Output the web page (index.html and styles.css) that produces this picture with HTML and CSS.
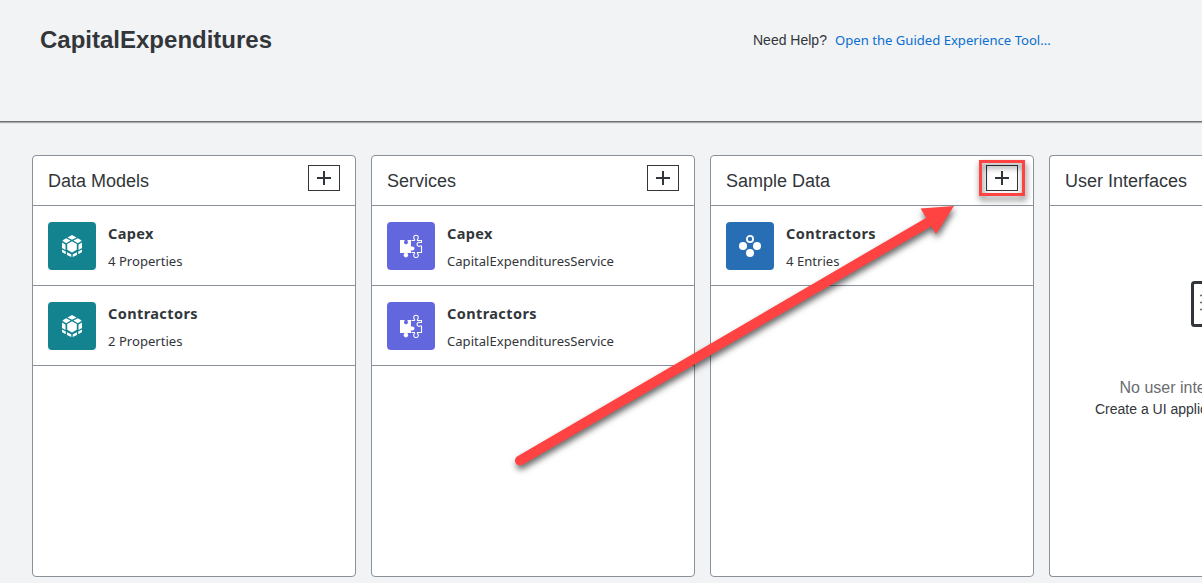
FILE: index.html
```html
<!DOCTYPE html>
<html lang="en">
<head>
<meta charset="utf-8">
<title>CapitalExpenditures</title>
<link rel="stylesheet" href="styles.css">
</head>
<body>
<svg width="0" height="0" class="symbols">
  <symbol id="plus" viewBox="0 0 14 14"><path d="M7 0v14M0 7h14" stroke="#32363a" stroke-width="2"/></symbol>
  <symbol id="model" viewBox="0 0 22 24">
    <path fill="#fff" d="M11 1 15.500 3.500 11 5.800 6.500 3.500ZM5.300 4.200 9.600 6.500 5.200 9.200 1.600 7V6.300ZM16.700 4.200 20.400 6.300V7L16.800 9.200 12.400 6.500ZM1 8.400 4.500 10.500V16L1 14ZM21 8.400V14L17.500 16V10.500ZM11 7.300 15.800 10.100V15.700L11 18.500 6.200 15.700V10.100ZM1 15.500 4.700 17.600V20.200L1 18ZM21 15.500V18L17.300 20.200V17.600ZM6 18.200 10.300 20.300V23L6 20.900ZM16 18.200V20.900L11.700 23V20.300Z"/>
  </symbol>
  <symbol id="service" viewBox="0 0 24 24">
    <path fill="#fff" d="M1 6h4.500v1.200a1.900 1.900 0 1 0 3 0V6H12v6.500h1.500a2 2 0 1 1 0 4H12V19H8.600v.8a2.200 2.200 0 1 1-3.400 0V19H1Z"/>
    <path fill="none" stroke="#fff" stroke-width="1.100" d="M12.500 6.500h3V5.300a2.300 2.300 0 1 1 3 0v1.200h4V8.500h-1.500a2 2 0 1 0 0 3.500h1.500v6.500h-4v1a2.300 2.300 0 1 1-3 0v-1h-3"/>
  </symbol>
  <symbol id="data" viewBox="0 0 24 24"><g fill="#fff"><circle cx="5" cy="12" r="4"/><circle cx="19" cy="12" r="4"/><circle cx="12" cy="19" r="4"/></g><circle cx="12" cy="5" r="3.100" fill="none" stroke="#fff" stroke-width="1.800"/></symbol>
</svg>
<header class="page-header">
  <h1 class="title">CapitalExpenditures</h1>
  <div class="help"><span class="question">Need Help?</span><a class="guide">Open the Guided Experience Tool...</a></div>
</header>
<main class="board">
  <section class="panel">
    <div class="panel-head"><h2>Data Models</h2><button class="add"><svg><use href="#plus"/></svg></button></div>
    <div class="item"><span class="tile teal"><svg class="model"><use href="#model"/></svg></span><div><b class="name">Capex</b><span class="detail">4 Properties</span></div></div>
    <div class="item"><span class="tile teal"><svg class="model"><use href="#model"/></svg></span><div><b class="name">Contractors</b><span class="detail">2 Properties</span></div></div>
  </section>
  <section class="panel">
    <div class="panel-head"><h2>Services</h2><button class="add"><svg><use href="#plus"/></svg></button></div>
    <div class="item"><span class="tile violet"><svg><use href="#service"/></svg></span><div><b class="name">Capex</b><span class="detail">CapitalExpendituresService</span></div></div>
    <div class="item"><span class="tile violet"><svg><use href="#service"/></svg></span><div><b class="name">Contractors</b><span class="detail">CapitalExpendituresService</span></div></div>
  </section>
  <section class="panel">
    <div class="panel-head"><h2>Sample Data</h2><button class="add"><svg><use href="#plus"/></svg></button></div>
    <div class="item"><span class="tile blue"><svg><use href="#data"/></svg></span><div><b class="name">Contractors</b><span class="detail">4 Entries</span></div></div>
  </section>
  <section class="panel clipped">
    <div class="panel-head"><h2>User Interfaces</h2></div>
    <div class="empty">
      <svg class="empty-icon" viewBox="0 0 40 46"><rect x="1.500" y="1.500" width="37" height="43" rx="2" fill="none" stroke="#32363a" stroke-width="3"/><path d="M9 14.500h20M9 21.500h20M9 28.500h20" stroke="#6a6d70" stroke-width="1.500"/></svg>
      <p class="empty-title">No user inte</p>
      <p class="empty-text">Create a UI applic</p>
    </div>
  </section>
</main>
<svg class="callout" viewBox="0 0 1202 583">
  <rect x="980.500" y="161.500" width="43" height="33" fill="none" stroke="#ff4343" stroke-width="3"/>
  <path d="M520 460.500 928 222.500" stroke="#ff4343" stroke-width="10" stroke-linecap="round"/>
  <path d="M954 206 920.500 208.500 936 234Z" fill="#ff4343"/>
</svg>
</body>
</html>
```
FILE: styles.css
```css
* { box-sizing: border-box; }
body {
  margin: 0;
  height: 583px;
  overflow: hidden;
  background: #f2f3f5;
  color: #32363a;
  font-family: "Liberation Sans", Arial, sans-serif;
}
h1, h2, p { margin: 0; }
.symbols { position: absolute; }
.page-header {
  height: 122px;
  padding: 26px 0 0 40px;
  display: flex;
  align-items: flex-start;
  border-bottom: 1px solid #6d7075;
  box-shadow: 0 1px 1px #a9abad;
}
.title { width: 713px; font-size: 24px; line-height: 28px; }
.help { display: flex; font-size: 14px; line-height: 28px; white-space: nowrap; }
.question { width: 82px; }
.guide { color: #0a6ed1; font-family: "Noto Sans", sans-serif; font-size: 13.100px; }
.board { display: flex; gap: 15px; padding: 33px 0 0 32px; overflow: hidden; }
.panel {
  flex: 0 0 324px;
  height: 422px;
  background: #fff;
  border: 1px solid #89919a;
  border-radius: 4px;
}
.clipped {
  flex: 0 0 153px;
  overflow: hidden;
  border-right: 0;
  border-radius: 4px 0 0 4px;
}
.panel-head {
  height: 50px;
  padding: 9px 15px 0;
  display: flex;
  justify-content: space-between;
  border-bottom: 1px solid #89919a;
}
.panel-head h2 { font-size: 18px; line-height: 32px; font-weight: 400; white-space: nowrap; }
.add {
  width: 32px;
  height: 26px;
  padding: 0;
  display: flex;
  align-items: center;
  justify-content: center;
  background: #fff;
  border: 1px solid #32363a;
}
.add svg { width: 14px; height: 14px; }
.item {
  height: 80px;
  padding: 15px 15px 0;
  display: flex;
  gap: 12px;
  border-bottom: 1px solid #89919a;
  font-family: "Noto Sans", sans-serif;
}
.tile {
  width: 48px;
  height: 48px;
  margin-top: 1px;
  display: flex;
  align-items: center;
  justify-content: center;
  border-radius: 4px;
}
.tile svg { width: 24px; height: 24px; }
.tile .model { width: 22px; }
.teal { background: #12838f; }
.violet { background: #6367de; }
.blue { background: #286eb4; }
.name, .detail { display: block; white-space: nowrap; }
.name { font-size: 14.500px; line-height: 24px; letter-spacing: .4px; }
.detail { margin-top: 4px; font-size: 13.100px; line-height: 24px; }
.empty { padding-left: 45px; white-space: nowrap; }
.empty-icon { display: block; width: 40px; height: 46px; margin: 75px 0 0 96px; }
.empty-title { margin: 50px 0 0 24.500px; font-size: 16px; line-height: 21px; color: #6a6d70; }
.empty-text { font-size: 14px; line-height: 22px; }
.callout {
  position: absolute;
  top: 0;
  left: 0;
  width: 1202px;
  height: 583px;
  pointer-events: none;
  filter: drop-shadow(1px 4px 3px rgba(0, 0, 0, .6));
}
```
